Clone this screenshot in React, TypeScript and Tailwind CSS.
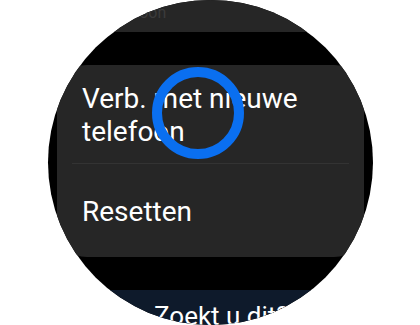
export default function App() {
  return (
    <div
      className="relative w-[420px] h-[325px] bg-white overflow-hidden"
      style={{ fontFamily: 'Roboto, "Noto Sans", sans-serif' }}
    >
      <div className="absolute left-[48px] top-0 w-[325px] h-[325px] rounded-full overflow-hidden bg-black flex flex-col">
        <div className="h-[32px] bg-[#262626] shrink-0 pl-[56px] pt-[1px]">
          <span className="text-[16px] leading-[20px] text-[#3b3b3b]">Telefoon</span>
        </div>
        <div className="h-[33px] shrink-0" />
        <div className="mx-[9px] h-[192px] shrink-0 rounded-[30px] bg-[#262626] flex flex-col">
          <div className="pl-[25px] pr-[16px] pt-[17px] pb-[15px] text-[28px] leading-[33px] text-white">
            Verb. met nieuwe telefoon
          </div>
          <div className="mx-[15px] h-px bg-[#333333]" />
          <div className="pl-[25px] pt-[30px] text-[28px] leading-[35px] text-white">Resetten</div>
        </div>
        <div className="h-[33px] shrink-0" />
        <div className="flex-1 bg-[#0e1a2b] pl-[106px] pt-[11px]">
          <span className="text-[26px] leading-[30px] text-white whitespace-nowrap">Zoekt u dit?</span>
        </div>
      </div>
      <div className="absolute left-[152px] top-[67px] w-[92px] h-[92px] rounded-full border-[10px] border-[#0a6ff0]" />
    </div>
  );
}
